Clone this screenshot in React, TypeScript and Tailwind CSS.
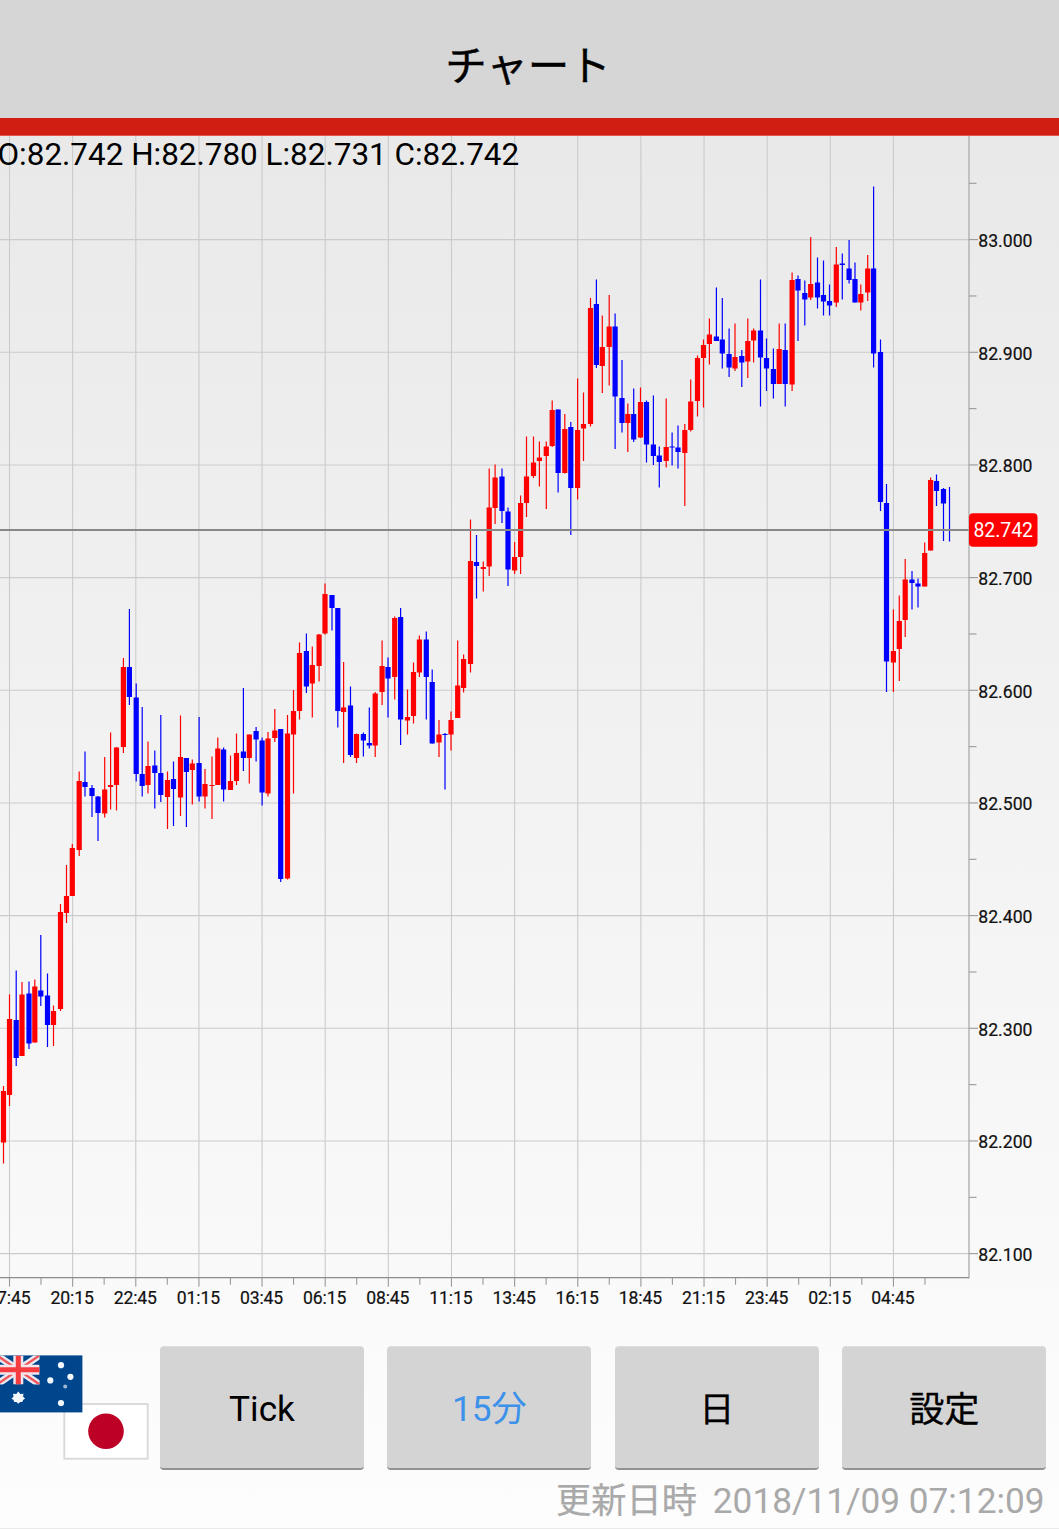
import clsx from 'clsx';

type Candle = [dir: 'U' | 'D', x: number, high: number, top: number, bottom: number, low: number];

const candles: Candle[] = [
  ['U', 3.5, 1086, 1091, 1142.5, 1163.5],
  ['U', 9.5, 994.5, 1019, 1095, 1106],
  ['D', 16.2, 970.5, 1020, 1058, 1066],
  ['U', 22, 982, 994.5, 1056, 1056],
  ['D', 29, 981.5, 993.5, 1043.5, 1049],
  ['U', 34.8, 979.5, 986.5, 1042.5, 1042.5],
  ['D', 40.8, 935, 990.5, 996.5, 1006],
  ['D', 47.5, 973.5, 995.5, 1025, 1047],
  ['U', 53.5, 1005.5, 1011, 1025, 1046],
  ['U', 60.5, 904, 912, 1009, 1011],
  ['U', 66.5, 865, 896, 913, 923],
  ['U', 72.3, 844, 848, 896, 896],
  ['U', 79.2, 771.5, 781, 850, 856],
  ['D', 85, 751.5, 782, 787, 796.5],
  ['D', 92, 785, 788, 796, 817],
  ['D', 98, 796, 796.5, 813, 841],
  ['U', 104.7, 757, 789.5, 813.5, 817.5],
  ['U', 110.6, 732.5, 785, 787, 809.5],
  ['U', 116.5, 747, 747.5, 785, 810.5],
  ['U', 123.4, 658, 667, 747, 753],
  ['D', 129.4, 609, 667, 697, 705],
  ['D', 136.2, 683.5, 697.5, 774, 781.5],
  ['D', 142.2, 707, 774, 786, 796.5],
  ['U', 148, 741.5, 766, 785, 793.5],
  ['D', 154.8, 750.5, 765.5, 773, 808.5],
  ['D', 160.8, 715, 773, 795, 802],
  ['U', 167.5, 771.5, 780, 797, 829],
  ['D', 173.5, 761.5, 779, 789, 826],
  ['U', 180.5, 715.5, 757, 797.5, 816],
  ['D', 186.4, 758, 758, 772, 827],
  ['U', 192.3, 759.5, 763.5, 770, 804.5],
  ['D', 199.1, 717, 763, 796.5, 801.5],
  ['U', 205, 769, 784, 796.5, 808.5],
  ['U', 212, 756.5, 785, 786, 819],
  ['U', 217.8, 737.5, 748.5, 785, 785],
  ['D', 223.6, 747.5, 749.5, 789.5, 801.5],
  ['U', 230.5, 755.5, 781, 790, 790],
  ['U', 236.5, 733.5, 753, 781, 785],
  ['D', 243.4, 688, 751.5, 758, 771],
  ['U', 249.3, 734.5, 734.5, 758, 783.5],
  ['D', 256.1, 727, 731, 739.5, 761.5],
  ['D', 262.1, 737.5, 740.5, 792.5, 805.5],
  ['U', 268, 732, 738.5, 793.5, 796.5],
  ['U', 274.8, 709, 730.5, 738, 742],
  ['D', 280.7, 729, 729, 879, 882],
  ['U', 287.5, 715, 733.5, 878.5, 879.5],
  ['U', 293.5, 690, 711, 734.5, 793.5],
  ['U', 299.5, 642.5, 653, 711, 719.5],
  ['D', 306.4, 633.5, 651, 686.5, 693],
  ['U', 312.3, 646.5, 665, 683.5, 717.5],
  ['U', 319.1, 634, 634.5, 666, 681.5],
  ['U', 325, 583.5, 594, 633.5, 634.5],
  ['D', 332, 595, 595, 608, 630.5],
  ['D', 337.8, 608, 608, 711, 727.5],
  ['U', 343.6, 662, 707.5, 712, 763],
  ['D', 350.5, 686.5, 705.5, 755, 757],
  ['U', 356.5, 733.5, 734, 758, 763],
  ['D', 363.4, 732.5, 734, 740.5, 756.5],
  ['D', 369.3, 707.5, 743, 745.5, 748.5],
  ['U', 375.2, 692, 693.5, 745.5, 757],
  ['U', 382.1, 640.5, 666, 692, 705],
  ['D', 388, 657.5, 667, 678.5, 717.5],
  ['U', 394.7, 616.5, 618, 677, 699.5],
  ['D', 400.6, 608, 617, 719.5, 745],
  ['U', 407.5, 689.5, 717, 720.5, 734.5],
  ['U', 413.5, 662.5, 672, 716, 723.5],
  ['U', 419.4, 635.5, 639.5, 672.5, 677],
  ['D', 426.3, 631.5, 639.5, 677, 719.5],
  ['D', 432.2, 669.5, 682, 743.5, 743.5],
  ['U', 439, 720, 734.5, 742.5, 757],
  ['D', 445, 733, 734, 735, 789.5],
  ['U', 451, 711.5, 720, 734.5, 750.5],
  ['U', 457.7, 640.5, 685.5, 718, 718],
  ['U', 463.6, 654.5, 659, 688, 692.5],
  ['U', 470.5, 519.5, 561, 664, 672.5],
  ['D', 476.5, 535, 562, 566, 598.5],
  ['U', 483.3, 561.5, 567, 569, 591.5],
  ['U', 489.2, 468.5, 507.5, 566.5, 576],
  ['U', 495.1, 464.5, 477.5, 508, 524],
  ['D', 502, 468.5, 476.5, 511, 523],
  ['D', 508, 507.5, 511.5, 569.5, 586],
  ['U', 514.6, 542, 557, 570.5, 574],
  ['U', 520.6, 495.5, 503, 557, 574],
  ['U', 526.5, 436.5, 476.5, 503, 517],
  ['U', 533.5, 436.5, 462.5, 476, 478],
  ['U', 539.4, 441.5, 457.5, 461, 486.5],
  ['U', 546.3, 441.5, 446.5, 456, 509],
  ['U', 552.2, 400.5, 410, 446, 447],
  ['D', 558.1, 409.5, 409.5, 473, 492.5],
  ['U', 564.8, 414, 429, 473, 473.5],
  ['D', 570.8, 422, 427, 488, 535],
  ['U', 577.6, 378.5, 430, 488, 499.5],
  ['U', 583.5, 392.5, 424, 428.5, 461],
  ['U', 590.5, 298, 308, 424, 426.5],
  ['D', 596.4, 279.5, 304, 365, 368],
  ['U', 602.3, 315.5, 347, 366, 393],
  ['U', 609.2, 295, 326.5, 347, 385.5],
  ['D', 615.1, 313.5, 326.5, 396.5, 449],
  ['D', 622, 360, 398, 423, 432.5],
  ['U', 627.8, 403.5, 414, 423, 452],
  ['D', 633.7, 388.5, 414, 439.5, 442],
  ['U', 640.5, 387.5, 402, 437.5, 438],
  ['D', 646.5, 400.5, 402, 444.5, 462.5],
  ['D', 653.4, 395.5, 444.5, 456, 465],
  ['D', 659.3, 446.5, 455.5, 462, 487.5],
  ['U', 666.2, 398.5, 447, 461, 467.5],
  ['D', 672.1, 432.5, 446.5, 447.5, 465.5],
  ['D', 678, 425.5, 447.5, 452, 468.5],
  ['U', 684.8, 424, 430, 453, 506],
  ['U', 690.7, 379.5, 401.5, 430, 431.5],
  ['U', 697.5, 355.5, 358, 401, 416.5],
  ['U', 703.5, 339.5, 345, 358, 407.5],
  ['U', 709.4, 318.5, 334.5, 344, 364.5],
  ['D', 716.4, 287.5, 336.5, 341, 341],
  ['D', 722.3, 298, 339.5, 353.5, 368.5],
  ['D', 729.1, 328.5, 354, 367.5, 377],
  ['U', 735, 323.5, 357, 368.5, 371],
  ['D', 741.8, 350, 356, 362.5, 387],
  ['U', 747.8, 318.5, 341, 361.5, 378],
  ['U', 753.6, 328.5, 330.5, 340.5, 362.5],
  ['D', 760.5, 279.5, 330.5, 357.5, 406.5],
  ['D', 766.5, 338.5, 358, 368.5, 391],
  ['D', 773.4, 348.5, 369, 384, 398.5],
  ['U', 779.2, 323.5, 349, 384, 384],
  ['D', 785.2, 323.5, 350, 384, 406.5],
  ['U', 792.1, 272.5, 280, 384.5, 391],
  ['D', 798, 275.5, 279, 290.5, 341],
  ['D', 804.8, 280.5, 293, 299.5, 325.5],
  ['U', 810.7, 237, 284, 297.5, 300],
  ['D', 817.5, 257.5, 282.5, 297.5, 308.5],
  ['D', 823.5, 260.5, 295, 301.5, 315.5],
  ['D', 829.5, 284.5, 301, 305.5, 315.5],
  ['U', 836.3, 247, 264.5, 302.5, 307],
  ['D', 842.3, 253.5, 263.5, 265, 299.5],
  ['D', 849.1, 240, 268.5, 280, 283.5],
  ['D', 855, 262.5, 279, 302.5, 302.5],
  ['U', 860.8, 284.5, 294, 302.5, 310.5],
  ['U', 867.7, 255, 268.5, 292.5, 301],
  ['D', 873.6, 186.5, 268.5, 353.5, 367.5],
  ['D', 880.5, 339.5, 352, 502, 511],
  ['D', 886.5, 484, 503, 661.5, 692],
  ['U', 893.4, 609.5, 651, 662.5, 692],
  ['U', 899.3, 595.5, 621, 649, 681],
  ['U', 905.2, 559, 579.5, 620, 637],
  ['D', 912, 571, 579.5, 583, 609.5],
  ['D', 918, 578.5, 583.5, 586.5, 607.5],
  ['U', 924.7, 542.5, 553, 586.5, 586.5],
  ['U', 930.6, 477.5, 480, 550.5, 550.5],
  ['D', 936.5, 474.5, 481, 491, 506],
  ['D', 943.5, 488, 489, 503.5, 541],
  ['D', 949.5, 487, 529.5, 530, 541.5],
];

const prices = ['83.000', '82.900', '82.800', '82.700', '82.600', '82.500', '82.400', '82.300', '82.200', '82.100'];
const times = [
  '17:45', '20:15', '22:45', '01:15', '03:45', '06:15', '08:45', '11:15',
  '13:45', '16:15', '18:45', '21:15', '23:45', '02:15', '04:45',
];

const priceY = (i: number) => 239.6 + i * 112.67;
const timeX = (i: number) => 9.5 + i * 63.14;

const AXIS_X = 969;
const AXIS_Y = 1277.7;

function Chart() {
  return (
    <svg
      viewBox="0 136 1059 1210"
      className="block h-[1210px] w-[1059px] shrink-0 font-['Roboto',sans-serif]"
    >
      {prices.map((p, i) => (
        <path key={p} d={`M0 ${priceY(i)}H${AXIS_X}`} stroke="#cbcbcb" strokeWidth="1.1" />
      ))}
      {times.map((t, i) => (
        <path key={t} d={`M${timeX(i)} 136V${AXIS_Y}`} stroke="#cbcbcb" strokeWidth="1.1" />
      ))}

      {candles.map(([dir, x, high, top, bottom, low]) => (
        <g key={x} fill={dir === 'U' ? '#ff0000' : '#0000ff'}>
          <rect x={x - 0.6} y={high} width="1.2" height={low - high} />
          <rect x={x - 2.6} y={top} width="5.2" height={Math.max(bottom - top, 0.8)} />
        </g>
      ))}

      <path d={`M0 529.9H${AXIS_X}`} stroke="#888" strokeWidth="2" />
      <path d={`M${AXIS_X} 136V${AXIS_Y + 0.5}`} stroke="#b0b0b0" strokeWidth="1.4" />
      <path d={`M0 ${AXIS_Y}H${AXIS_X}`} stroke="#8c8c8c" strokeWidth="1.2" />

      {prices.map((p, i) => (
        <g key={p} stroke="#999" strokeWidth="1.1">
          <path d={`M${AXIS_X} ${priceY(i)}h9`} />
          <path d={`M${AXIS_X} ${priceY(i) - 56.3}h7.5`} />
        </g>
      ))}
      {times.map((t, i) => (
        <g key={t} stroke="#999" strokeWidth="1.1">
          <path d={`M${timeX(i)} ${AXIS_Y}v9`} />
          <path d={`M${timeX(i) + 31.5} ${AXIS_Y}v7`} />
        </g>
      ))}

      <g fontSize="17.6" fill="#111" stroke="#111" strokeWidth="0.2">
        {prices.map((p, i) => (
          <text key={p} x="978.3" y={priceY(i) + 7.3} textLength="54.2">
            {p}
          </text>
        ))}
        {times.map((t, i) => (
          <text key={t} x={timeX(i) - 0.5} y="1304.4" textAnchor="middle" textLength="43.3">
            {t}
          </text>
        ))}
      </g>

      <text x="-2.5" y="165.4" fontSize="32" textLength="521.7" lengthAdjust="spacingAndGlyphs" fill="#000">
        O:82.742 H:82.780 L:82.731 C:82.742
      </text>

      <rect x="969" y="513.3" width="68.5" height="33.5" rx="4" fill="#ff0000" />
      <text x="973.5" y="537.3" fontSize="19.5" textLength="59.5" fill="#fff">
        82.742
      </text>
    </svg>
  );
}

function PairFlags() {
  return (
    <svg viewBox="0 1346 160 124" className="h-[124px] w-[160px] shrink-0">
      <rect x="64.3" y="1404" width="83.4" height="54.7" fill="#fff" stroke="#d8d8d8" strokeWidth="1.8" />
      <circle cx="106" cy="1431.2" r="17.8" fill="#bc0026" />

      <rect x="-3" y="1355.4" width="85.4" height="57" fill="#00468c" />
      <svg x="-3" y="1355.4" width="42.6" height="29" viewBox="0 0 42.6 29">
        <path d="M0 0L42.6 29M42.6 0L0 29" stroke="#e8eaf2" strokeWidth="7" />
        <path d="M0 0L42.6 29M42.6 0L0 29" stroke="#f2555a" strokeWidth="2.4" />
        <path d="M21.3 0V29M0 14.4H42.6" stroke="#f2e4ea" strokeWidth="10" />
        <path d="M21.3 0V29M0 14.4H42.6" stroke="#f43b40" strokeWidth="5" />
      </svg>
      <g fill="#f4f8fc">
        <path d="M18.3 1391.5l2 2.4 3.2-.2-.4 3 2 1.8-2 1.4-.8 2.2-2.2-.2-1.8 1.8-1.8-1.8-2.2.2-.8-2.2-2-1.4 2-1.8-.4-3 3.2.2z" />
        <circle cx="61" cy="1365.2" r="3.1" />
        <circle cx="50.3" cy="1380.4" r="3.1" />
        <circle cx="70.4" cy="1376.8" r="3.1" />
        <circle cx="61" cy="1403" r="3.1" />
        <circle cx="65.2" cy="1386.4" r="2" opacity="0.65" />
      </g>
    </svg>
  );
}

const buttons = [
  { label: 'Tick', active: false },
  { label: '15分', active: true },
  { label: '日', active: false, kanji: true },
  { label: '設定', active: false, kanji: true },
];

export default function App() {
  return (
    <div className="flex h-[1529px] w-[1059px] flex-col overflow-hidden bg-white font-['Roboto','Noto_Sans_CJK_JP',sans-serif]">
      <header className="flex h-[118px] shrink-0 items-center justify-center bg-[#d6d6d6] pt-[15px] pr-[3px]">
        <h1 className="text-[41.5px] leading-none font-normal text-black [-webkit-text-stroke:0.4px_#000]">チャート</h1>
      </header>
      <div className="h-[18px] shrink-0 border-b border-[#df5850] bg-[#d01e13]" />

      <main className="flex flex-1 flex-col border-b border-[#eaeaea] bg-linear-to-b from-[#e9e9e9] to-[#fdfdfd]">
        <Chart />
        <div className="flex h-[124px] shrink-0">
          <PairFlags />
          <div className="flex gap-[23.45px]">
            {buttons.map((b) => (
              <button
                key={b.label}
                className={clsx(
                  'flex w-[204px] items-center justify-center rounded-[4px] border-t border-b-[2.5px] border-t-[#dedede] border-b-[#929292] bg-[#d4d4d4] text-[35.2px] leading-none',
                  b.active ? 'text-[#3c91ea]' : 'text-black',
                  b.kanji ? 'pt-[6px] [-webkit-text-stroke:0.3px_#000]' : 'pt-[4px]',
                )}
              >
                {b.label}
              </button>
            ))}
          </div>
        </div>
        <p className="flex justify-end gap-4 pt-[13.5px] pr-[14.5px] text-[35.2px] leading-none whitespace-nowrap text-[#a9a9a9]">
          <span className="[-webkit-text-stroke:0.25px_#a9a9a9]">更新日時</span>
          <span>2018/11/09 07:12:09</span>
        </p>
      </main>
    </div>
  );
}
